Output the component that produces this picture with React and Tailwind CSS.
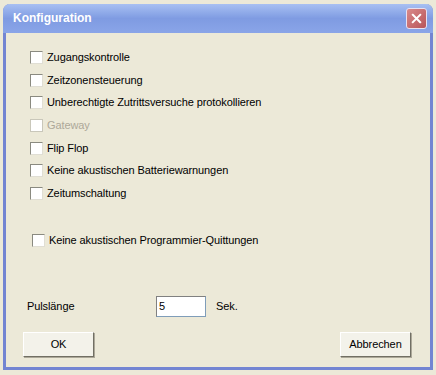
import React from 'react'

const Check = ({ label, disabled, className = '' }) => (
    <div className={`flex items-center h-[13px] ${className}`}>
        <div
            className={`w-[13px] h-[13px] border bg-white ${
                disabled ? 'border-[#c9c7ba]' : 'border-[#8a8a80] border-r-[#e0ded4] border-b-[#e0ded4]'
            }`}
        ></div>
        <span className={`ml-[4px] ${disabled ? 'text-[#aca899]' : 'text-black'}`}>{label}</span>
    </div>
)

const Button = ({ children }) => (
    <button className="w-[71px] h-[25px] bg-[#f3f2ea] border border-[#ffffff] border-r-[#716f64] border-b-[#716f64] shadow-[1px_1px_0_#aca899] text-black">
        {children}
    </button>
)

const App = () => {
    return (
        <div
            className="w-[436px] h-[375px] bg-[#ece9d8] pt-[4px] px-[3px] text-[11px] leading-[13px] tracking-[-0.1px]"
            style={{ fontFamily: '"Liberation Sans", Arial, sans-serif' }}
        >
            <div className="w-[430px] h-[366px] flex flex-col rounded-t-[7px] border-[3px] border-t-0 border-[#7385d2] bg-[#ece9d8]">
                <div className="h-[29px] shrink-0 -mx-[3px] rounded-t-[7px] bg-gradient-to-b from-[#a8c0f2] via-[#7f9be2] to-[#8aa5e8] flex items-center justify-between pl-[10px] pr-[6px]">
                    <span className="text-white font-bold text-[12px] tracking-normal">Konfiguration</span>
                    <div className="w-[21px] h-[21px] rounded-[3px] border border-[#e8e0f0] bg-gradient-to-br from-[#d98a8a] to-[#b8545a] flex items-center justify-center">
                        <svg viewBox="0 0 12 12" className="w-[11px] h-[11px]">
                            <path d="M2 2L10 10M10 2L2 10" stroke="white" strokeWidth="2.2" strokeLinecap="square" />
                        </svg>
                    </div>
                </div>

                <div className="flex flex-col pl-[24px] pt-[18px] gap-y-[9.67px]">
                    <Check label="Zugangskontrolle" />
                    <Check label="Zeitzonensteuerung" />
                    <Check label="Unberechtigte Zutrittsversuche protokollieren" />
                    <Check label="Gateway" disabled />
                    <Check label="Flip Flop" />
                    <Check label="Keine akustischen Batteriewarnungen" />
                    <Check label="Zeitumschaltung" />
                    <Check label="Keine akustischen Programmier-Quittungen" className="mt-[24.3px] ml-[2px]" />
                </div>

                <div className="flex items-center mt-[49px] pl-[21px]">
                    <span className="w-[129px]">Pulslänge</span>
                    <div className="w-[50px] h-[21px] bg-white border border-[#7f9db9] border-t-[#808080] border-l-[#808080] flex items-center pl-[2px]">5</div>
                    <span className="ml-[10px]">Sek.</span>
                </div>

                <div className="flex justify-between mt-[15px] pl-[17px] pr-[19px]">
                    <Button>OK</Button>
                    <Button>Abbrechen</Button>
                </div>
            </div>
        </div>
    )
}

export default App
